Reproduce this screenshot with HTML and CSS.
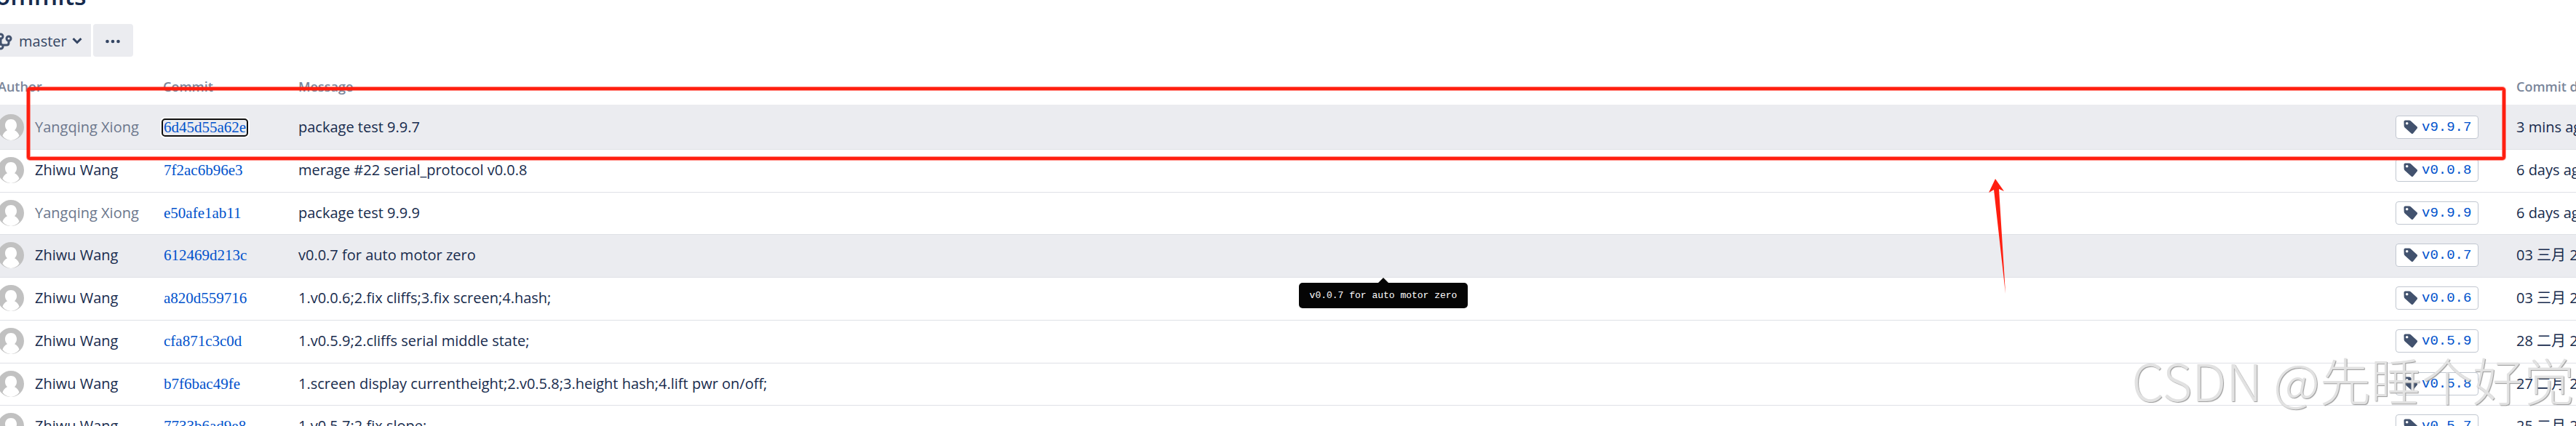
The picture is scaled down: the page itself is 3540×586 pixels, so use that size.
FILE: index.html
```html
<!DOCTYPE html>
<html lang="en">
<head>
  <meta charset="UTF-8">
  <meta name="viewport" content="width=device-width, initial-scale=1.0">
  <title>Commits</title>
  <link rel="stylesheet" href="styles.css">
</head>
<body>
  <!-- shared icons -->
  <svg class="sprite" xmlns="http://www.w3.org/2000/svg">
    <symbol id="avatar" viewBox="0 0 36 36">
      <circle cx="18" cy="18" r="18" fill="#c1c1c1"/>
      <path d="M18 7c4.600 0 8 3.500 8 8.300 0 3.200-1.200 5.200-3 6.900 3.200 1.300 5.300 4 6.500 7.500C26.500 33.600 22.600 36 18 36S9.500 33.600 6.500 29.700C7.700 26.200 9.800 23.500 13 22.200c-1.800-1.700-3-3.700-3-6.900C10 10.500 13.400 7 18 7z" fill="#fff"/>
    </symbol>
    <symbol id="tag" viewBox="0 0 20 20">
      <path fill-rule="evenodd" d="M2.500.500h5.300c.8 0 1.400.200 2 .800l8.700 8c.8.800.8 1.700.1 2.500l-5.500 6.600c-.7.800-1.700.8-2.500.1L1.700 10.400C1.100 9.800.800 9.200.700 8.400L.500 2.500c0-1.200.8-2 2-2zM4.700 2.900a1.800 1.800 0 1 0 0 3.600 1.800 1.800 0 0 0 0-3.600z" fill="#42526e"/>
    </symbol>
  </svg>

  <main class="page">
    <h1 class="title">Commits</h1>

    <div class="toolbar">
      <button class="btn btn-branch" type="button">
        <svg class="branch-icon" viewBox="0 0 24 24" fill="none" stroke="#42526e" stroke-width="3">
          <circle cx="8" cy="5" r="3"/>
          <circle cx="8" cy="19" r="3"/>
          <circle cx="19" cy="8" r="3"/>
          <path d="M8 8v8M19 11v3c0 2-1 3-3 3h-5"/>
        </svg>
        master
        <svg class="chevron" viewBox="0 0 14 10" fill="none" stroke="#344563" stroke-width="3"><path d="M1.500 1L7 6.500 12.500 1"/></svg>
      </button>
      <button class="btn btn-more" type="button" aria-label="More actions">
        <svg class="dots" viewBox="0 0 20 6" fill="#344563"><circle cx="2.500" cy="3" r="2.300"/><circle cx="10" cy="3" r="2.300"/><circle cx="17.500" cy="3" r="2.300"/></svg>
      </button>
    </div>

    <table class="commits">
      <thead>
        <tr>
          <th class="author">Author</th>
          <th class="commit">Commit</th>
          <th class="message">Message</th>
          <th class="date">Commit date</th>
        </tr>
      </thead>
      <tbody>
        <tr class="focused">
          <td><div class="user inactive"><svg class="avatar"><use href="#avatar"/></svg>Yangqing Xiong</div></td>
          <td><a class="hash" href="#">6d45d55a62e</a></td>
          <td><div class="msg">package test 9.9.7<a class="tag" href="#"><svg><use href="#tag"/></svg>v9.9.7</a></div></td>
          <td>3 mins ago</td>
        </tr>
        <tr>
          <td><div class="user"><svg class="avatar"><use href="#avatar"/></svg>Zhiwu Wang</div></td>
          <td><a class="hash" href="#">7f2ac6b96e3</a></td>
          <td><div class="msg">merage #22 serial_protocol v0.0.8<a class="tag" href="#"><svg><use href="#tag"/></svg>v0.0.8</a></div></td>
          <td>6 days ago</td>
        </tr>
        <tr>
          <td><div class="user inactive"><svg class="avatar"><use href="#avatar"/></svg>Yangqing Xiong</div></td>
          <td><a class="hash" href="#">e50afe1ab11</a></td>
          <td><div class="msg">package test 9.9.9<a class="tag" href="#"><svg><use href="#tag"/></svg>v9.9.9</a></div></td>
          <td>6 days ago</td>
        </tr>
        <tr class="hovered">
          <td><div class="user"><svg class="avatar"><use href="#avatar"/></svg>Zhiwu Wang</div></td>
          <td><a class="hash" href="#">612469d213c</a></td>
          <td>
            <div class="msg">v0.0.7 for auto motor zero<a class="tag" href="#"><svg><use href="#tag"/></svg>v0.0.7</a>
              <span class="tooltip" role="tooltip">v0.0.7 for auto motor zero</span>
            </div>
          </td>
          <td>03 三月 2023</td>
        </tr>
        <tr>
          <td><div class="user"><svg class="avatar"><use href="#avatar"/></svg>Zhiwu Wang</div></td>
          <td><a class="hash" href="#">a820d559716</a></td>
          <td><div class="msg">1.v0.0.6;2.fix cliffs;3.fix screen;4.hash;<a class="tag" href="#"><svg><use href="#tag"/></svg>v0.0.6</a></div></td>
          <td>03 三月 2023</td>
        </tr>
        <tr>
          <td><div class="user"><svg class="avatar"><use href="#avatar"/></svg>Zhiwu Wang</div></td>
          <td><a class="hash" href="#">cfa871c3c0d</a></td>
          <td><div class="msg">1.v0.5.9;2.cliffs serial middle state;<a class="tag" href="#"><svg><use href="#tag"/></svg>v0.5.9</a></div></td>
          <td>28 二月 2023</td>
        </tr>
        <tr>
          <td><div class="user"><svg class="avatar"><use href="#avatar"/></svg>Zhiwu Wang</div></td>
          <td><a class="hash" href="#">b7f6bac49fe</a></td>
          <td><div class="msg">1.screen display currentheight;2.v0.5.8;3.height hash;4.lift pwr on/off;<a class="tag" href="#"><svg><use href="#tag"/></svg>v0.5.8</a></div></td>
          <td>27 二月 2023</td>
        </tr>
        <tr>
          <td><div class="user"><svg class="avatar"><use href="#avatar"/></svg>Zhiwu Wang</div></td>
          <td><a class="hash" href="#">7733b6ad9e8</a></td>
          <td><div class="msg">1.v0.5.7;2.fix slope;<a class="tag" href="#"><svg><use href="#tag"/></svg>v0.5.7</a></div></td>
          <td>25 二月 2023</td>
        </tr>
      </tbody>
    </table>
  </main>

  <!-- annotations over the table -->
  <div class="mark-box"></div>
  <svg class="mark-arrow" viewBox="0 0 24 158"><path d="M9 0L21 17 14 14 23 158 7 15 0 19z" fill="#ff1f10"/></svg>
  <div class="watermark">CSDN @先睡个好觉</div>
</body>
</html>
```

FILE: styles.css
```css
* {
  box-sizing: border-box;
}

body {
  margin: 0;
  height: 100vh;
  overflow: hidden;
  position: relative;
  background: #fff;
  color: #172b4d;
  font-family: "Open Sans", "Noto Sans CJK SC", sans-serif;
  font-size: 20px;
  line-height: 30px;
}

.sprite {
  display: none;
}

.page {
  margin-left: -18px;
  margin-right: -72px;
}

.title {
  margin: -30px 0 0 -10px;
  font-size: 34px;
  font-weight: 600;
  line-height: 48px;
}

.toolbar {
  display: flex;
  gap: 3px;
  margin-top: 15px;
}

.btn {
  display: flex;
  align-items: center;
  height: 45px;
  padding: 2px 0 0;
  border: none;
  border-radius: 4px;
  background: #ebecf0;
  color: #344563;
  font: inherit;
  cursor: pointer;
}

.btn-branch {
  padding: 2px 12px 0 11px;
  border-radius: 4px 0 0 4px;
}

.branch-icon {
  width: 24px;
  height: 24px;
  margin-right: 9px;
}

.chevron {
  width: 14px;
  height: 10px;
  margin-left: 7px;
}

.btn-more {
  width: 55px;
  justify-content: center;
}

.dots {
  width: 20px;
  height: 6px;
}

/* Commit list */
.commits {
  width: 100%;
  margin-top: 12px;
  border-collapse: separate;
  border-spacing: 0;
  table-layout: fixed;
}

.commits th {
  height: 54px;
  padding: 4px 15px 0;
  color: #7a869a;
  font-size: 18px;
  font-weight: 600;
  text-align: left;
}

.commits .author {
  width: 227px;
}

.commits .commit {
  width: 186px;
}

.commits .date {
  width: 169px;
}

.commits td {
  height: 59px;
  padding: 0 15px 2px;
  border-bottom: 1px solid #dfe1e6;
  white-space: nowrap;
}

.commits tbody tr:first-child td {
  height: 62px;
  padding-bottom: 0;
}

.commits tbody tr:nth-child(4n+3) td {
  height: 58px;
}

.focused,
.hovered {
  background: #ebecf0;
}

.user {
  display: flex;
  align-items: center;
  gap: 15px;
}

.inactive {
  color: #6b778c;
}

.avatar {
  width: 36px;
  height: 36px;
}

.hash,
.tag {
  color: #0052cc;
  text-decoration: none;
}

.hash {
  display: inline-block;
  padding: 0 1px;
  font-family: "Liberation Serif", serif;
  font-size: 21px;
  line-height: 21px;
}

.focused .hash {
  outline: 2px solid #101010;
  border-radius: 3px;
  box-shadow: 0 0 0 4px #fff;
}

.msg {
  display: flex;
  align-items: center;
  justify-content: space-between;
  position: relative;
}

.tag {
  display: flex;
  align-items: center;
  gap: 5px;
  width: 114px;
  height: 32px;
  margin-right: 22px;
  padding-left: 10px;
  border: 1px solid #c1c7d0;
  border-radius: 4px;
  background: #fff;
  font-family: "Liberation Mono", monospace;
  font-size: 19px;
}

.tag svg {
  width: 20px;
  height: 20px;
}

.tooltip {
  position: absolute;
  top: 54px;
  left: calc(50% - 18px);
  width: 232px;
  transform: translateX(-50%);
  padding: 3px 0 2px;
  border-radius: 5px;
  background: #050505;
  color: #fff;
  font-family: "Liberation Mono", monospace;
  font-size: 13px;
  text-align: center;
}

.tooltip::before {
  content: "";
  position: absolute;
  top: -7px;
  left: 50%;
  margin-left: -7px;
  border: 7px solid transparent;
  border-top: 0;
  border-bottom-color: #050505;
}

/* Annotations */
.mark-box {
  position: absolute;
  top: 120px;
  left: 37px;
  right: 97px;
  height: 100px;
  border: 4px solid #ff1f10;
  border-radius: 4px;
  box-shadow: 0 0 0 1px rgba(255, 31, 16, 0.5), inset 0 0 0 1px rgba(255, 31, 16, 0.5);
}

.mark-arrow {
  position: absolute;
  top: 246px;
  right: 783px;
  width: 24px;
  height: 158px;
}

.watermark {
  position: absolute;
  right: 2px;
  bottom: 14px;
  color: #e2e2e2;
  font-family: "Noto Sans CJK SC", sans-serif;
  font-size: 70px;
  font-weight: 300;
  line-height: 100px;
  text-shadow: 1px 1px 1px #999;
  white-space: nowrap;
}
```
